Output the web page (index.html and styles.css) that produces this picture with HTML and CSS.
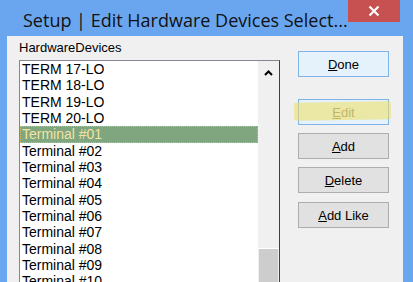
FILE: index.html
```html
<!DOCTYPE html>
<html>
<head>
<meta charset="utf-8">
<link rel="stylesheet" href="styles.css">
</head>
<body>
<div class="window">
  <div class="titlebar">
    <div class="title">Setup | Edit Hardware Devices Select...</div>
    <div class="close">
      <svg width="12" height="12" viewBox="0 0 12 12"><path d="M1.5 1.5 L10.5 10.5 M10.5 1.5 L1.5 10.5" stroke="#fff" stroke-width="2.2" fill="none"/></svg>
    </div>
  </div>
  <div class="frame">
    <div class="client">
      <div class="listcol">
        <div class="label">HardwareDevices</div>
        <div class="listbox">
          <div class="items">
            <div class="item">TERM 17-LO</div>
            <div class="item">TERM 18-LO</div>
            <div class="item">TERM 19-LO</div>
            <div class="item">TERM 20-LO</div>
            <div class="item selected">Terminal #01</div>
            <div class="item">Terminal #02</div>
            <div class="item">Terminal #03</div>
            <div class="item">Terminal #04</div>
            <div class="item">Terminal #05</div>
            <div class="item">Terminal #06</div>
            <div class="item">Terminal #07</div>
            <div class="item">Terminal #08</div>
            <div class="item">Terminal #09</div>
            <div class="item">Terminal #10</div>
          </div>
          <div class="scrollbar">
            <div class="arrow">
              <svg width="9" height="6" viewBox="0 0 9 6"><path d="M1 5 L4.5 1.5 L8 5" stroke="#000" stroke-width="2" fill="none"/></svg>
            </div>
            <div class="track"></div>
            <div class="thumb"></div>
          </div>
        </div>
      </div>
      <div class="buttons">
        <div class="btn focus"><span><u>D</u>one</span></div>
        <div class="btn focus edit"><span class="dim"><u>E</u>dit</span><div class="marker"></div></div>
        <div class="btn"><span><u>A</u>dd</span></div>
        <div class="btn"><span><u>D</u>elete</span></div>
        <div class="btn last"><span><u>A</u>dd Like</span></div>
      </div>
    </div>
    <div class="rborder"></div>
  </div>
</div>
</body>
</html>
```
FILE: styles.css
```css
html, body {
  margin: 0;
  padding: 0;
}
body {
  width: 413px;
  height: 282px;
  overflow: hidden;
  background: #d6e6f9;
}
.window {
  width: 413px;
  height: 282px;
  background: #6aa6ef;
  display: flex;
  flex-direction: column;
  overflow: hidden;
}
.titlebar {
  height: 36px;
  display: flex;
  align-items: flex-start;
  flex-shrink: 0;
}
.title {
  font-family: "Open Sans", sans-serif;
  font-size: 18px;
  color: #111;
  padding-left: 23px;
  padding-top: 8px;
  line-height: 24px;
  white-space: nowrap;
  flex: 1;
}
.close {
  width: 54px;
  height: 22px;
  background: #c75050;
  margin-right: 13px;
  display: flex;
  align-items: center;
  justify-content: center;
}
.frame {
  display: flex;
  flex: 1;
  min-height: 0;
  padding-left: 7px;
}
.client {
  width: 396px;
  background: #f0f0f0;
  display: flex;
  padding-left: 12px;
  box-sizing: border-box;
  flex-shrink: 0;
  overflow: hidden;
}
.rborder {
  width: 6px;
  background: #6aa6ef;
}
.listcol {
  display: flex;
  flex-direction: column;
  padding-top: 4px;
}
.label {
  font-family: "Liberation Sans", Arial, sans-serif;
  font-size: 13px;
  line-height: 16px;
  color: #000;
  margin-bottom: 4px;
}
.listbox {
  width: 261px;
  height: 226px;
  border: 1px solid #828790;
  border-bottom: none;
  border-right-color: #404040;
  box-sizing: border-box;
  background: #fff;
  display: flex;
  overflow: hidden;
}
.items {
  width: 238px;
  display: flex;
  flex-direction: column;
}
.item {
  font-family: "Liberation Sans", Arial, sans-serif;
  font-size: 14px;
  line-height: 16.33px;
  height: 16.33px;
  flex-shrink: 0;
  padding-left: 2px;
  color: #000;
  white-space: nowrap;
  box-sizing: border-box;
}
.item.selected {
  background: #7fa67f;
  color: #f3e3a2;
  outline: 1px dotted #e6b64c;
  outline-offset: -1px;
}
.scrollbar {
  width: 21px;
  display: flex;
  flex-direction: column;
  background: #f0f0f0;
}
.arrow {
  height: 20px;
  display: flex;
  align-items: center;
  justify-content: center;
  padding-top: 2px;
}
.track {
  height: 165px;
  border-bottom: 1px solid #fff;
}
.thumb {
  flex: 1;
  margin: 0 1px;
  background: #cdcdcd;
}
.buttons {
  display: flex;
  flex-direction: column;
  gap: 8px;
  padding-top: 15px;
  margin-left: 18px;
}
.btn {
  width: 91px;
  height: 26px;
  box-sizing: border-box;
  border: 1px solid #adadad;
  background: #e1e1e1;
  display: flex;
  align-items: center;
  justify-content: center;
  font-family: "Liberation Sans", Arial, sans-serif;
  font-size: 13px;
  color: #000;
  position: relative;
}
.btn.focus {
  border-color: #7eb4ea;
  background: #e5f1fb;
}
.btn.edit {
  margin-top: 14px;
}
.btn.last {
  margin-top: 1px;
}
.dim {
  color: #858570;
}
.marker {
  position: absolute;
  left: -5px;
  top: 2px;
  width: 97px;
  height: 18px;
  background: rgba(240, 222, 95, 0.55);
  transform: rotate(-0.8deg);
  border-radius: 2px;
}
```
